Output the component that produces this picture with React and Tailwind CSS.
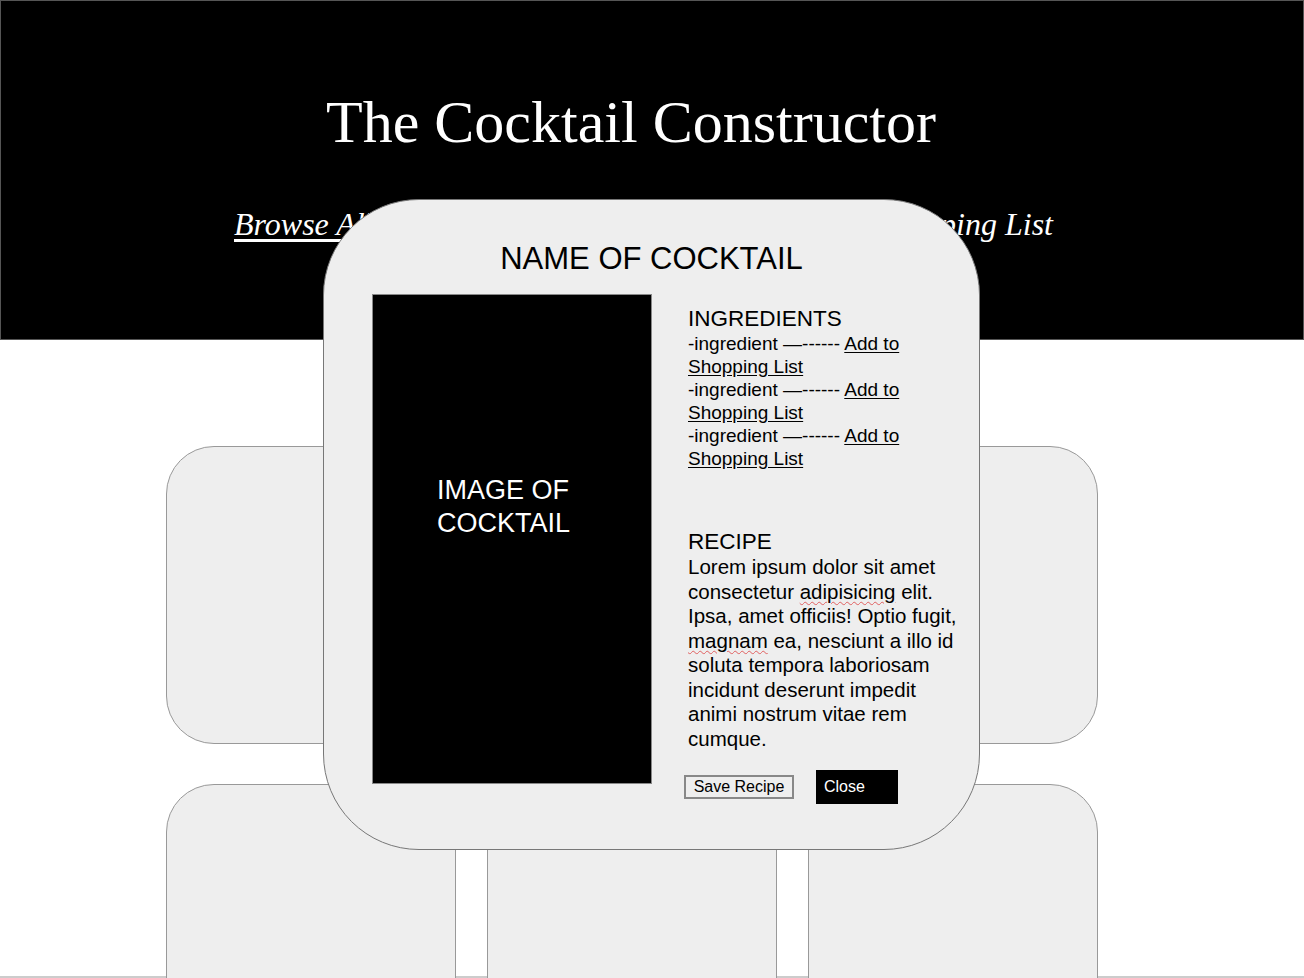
import React from 'react';

const sans = { fontFamily: '"Liberation Sans", Arial, sans-serif' };
const serif = { fontFamily: '"Liberation Serif", "Times New Roman", serif' };

const ingredients = ['-ingredient', '-ingredient', '-ingredient'];

function Card() {
    return <div className="h-[298px] w-[290px] rounded-[48px] border border-[#999] bg-[#eeeeee]"></div>;
}

function RecipeModal() {
    return (
        <div
            className="absolute left-[323px] top-[199px] h-[651px] w-[657px] rounded-[96px] border border-[#777] bg-[#eeeeee] pt-[43px]"
            style={sans}
        >
            <h2 className="text-center text-[31px] leading-none text-black">NAME OF COCKTAIL</h2>
            <div className="mt-[20px] flex pl-[48px]">
                <div className="h-[490px] w-[280px] border border-[#888] bg-black pl-[64px] pt-[179px] text-[27px] leading-[33px] text-white">
                    IMAGE OF
                    <br />
                    COCKTAIL
                </div>
                <div className="ml-[36px] mt-[13px] w-[270px] text-black">
                    <h3 className="text-[22.5px] leading-[24px]">INGREDIENTS</h3>
                    <ul className="mt-[1px] text-[19px] leading-[23px]">
                        {ingredients.map((item, i) => (
                            <li key={i}>
                                {item} —------ <span className="underline underline-offset-2">Add to Shopping List</span>
                            </li>
                        ))}
                    </ul>
                    <h3 className="mt-[60px] text-[22.5px] leading-[24px]">RECIPE</h3>
                    <p className="mt-[1px] text-[20.5px] leading-[24.5px]">
                        Lorem ipsum dolor sit amet consectetur{' '}
                        <span className="underline decoration-wavy decoration-[#e06060] decoration-1 underline-offset-2">adipisicing</span>{' '}
                        elit. Ipsa, amet officiis! Optio fugit,{' '}
                        <span className="underline decoration-wavy decoration-[#e06060] decoration-1 underline-offset-2">magnam</span>{' '}
                        ea, nesciunt a illo id soluta tempora laboriosam incidunt deserunt impedit animi nostrum vitae rem cumque.
                    </p>
                    <div className="-ml-[4px] mt-[19px] flex items-center gap-[22px]">
                        <button className="h-[24px] w-[110px] border-2 border-[#888] bg-[#eeeeee] text-[16px] leading-[20px] text-black">
                            Save Recipe
                        </button>
                        <button className="h-[34px] w-[82px] bg-black pl-[8px] text-left text-[16px] leading-[20px] text-white">
                            Close
                        </button>
                    </div>
                </div>
            </div>
        </div>
    );
}

export default function App() {
    return (
        <div className="relative h-[978px] w-[1304px] overflow-hidden bg-white">
            <header className="h-[340px] border border-[#555] bg-black pt-[91px] text-white" style={serif}>
                <h1 className="pr-[42px] text-center text-[60px] leading-none">The Cocktail Constructor</h1>
                <nav className="mt-[56px] flex justify-between pl-[233px] pr-[250px] text-[32px] italic leading-none">
                    <a href="#" className="underline underline-offset-4">Browse All Cocktails</a>
                    <a href="#">Saved Recipes</a>
                    <a href="#">Shopping List</a>
                </nav>
            </header>

            <main className="h-[638px] border-b-2 border-[#ccc] pl-[166px] pt-[106px]">
                <div className="grid grid-cols-[290px_290px_290px] gap-x-[31px] gap-y-[40px]">
                    <Card />
                    <Card />
                    <Card />
                    <Card />
                    <Card />
                    <Card />
                </div>
            </main>

            <RecipeModal />
        </div>
    );
}
